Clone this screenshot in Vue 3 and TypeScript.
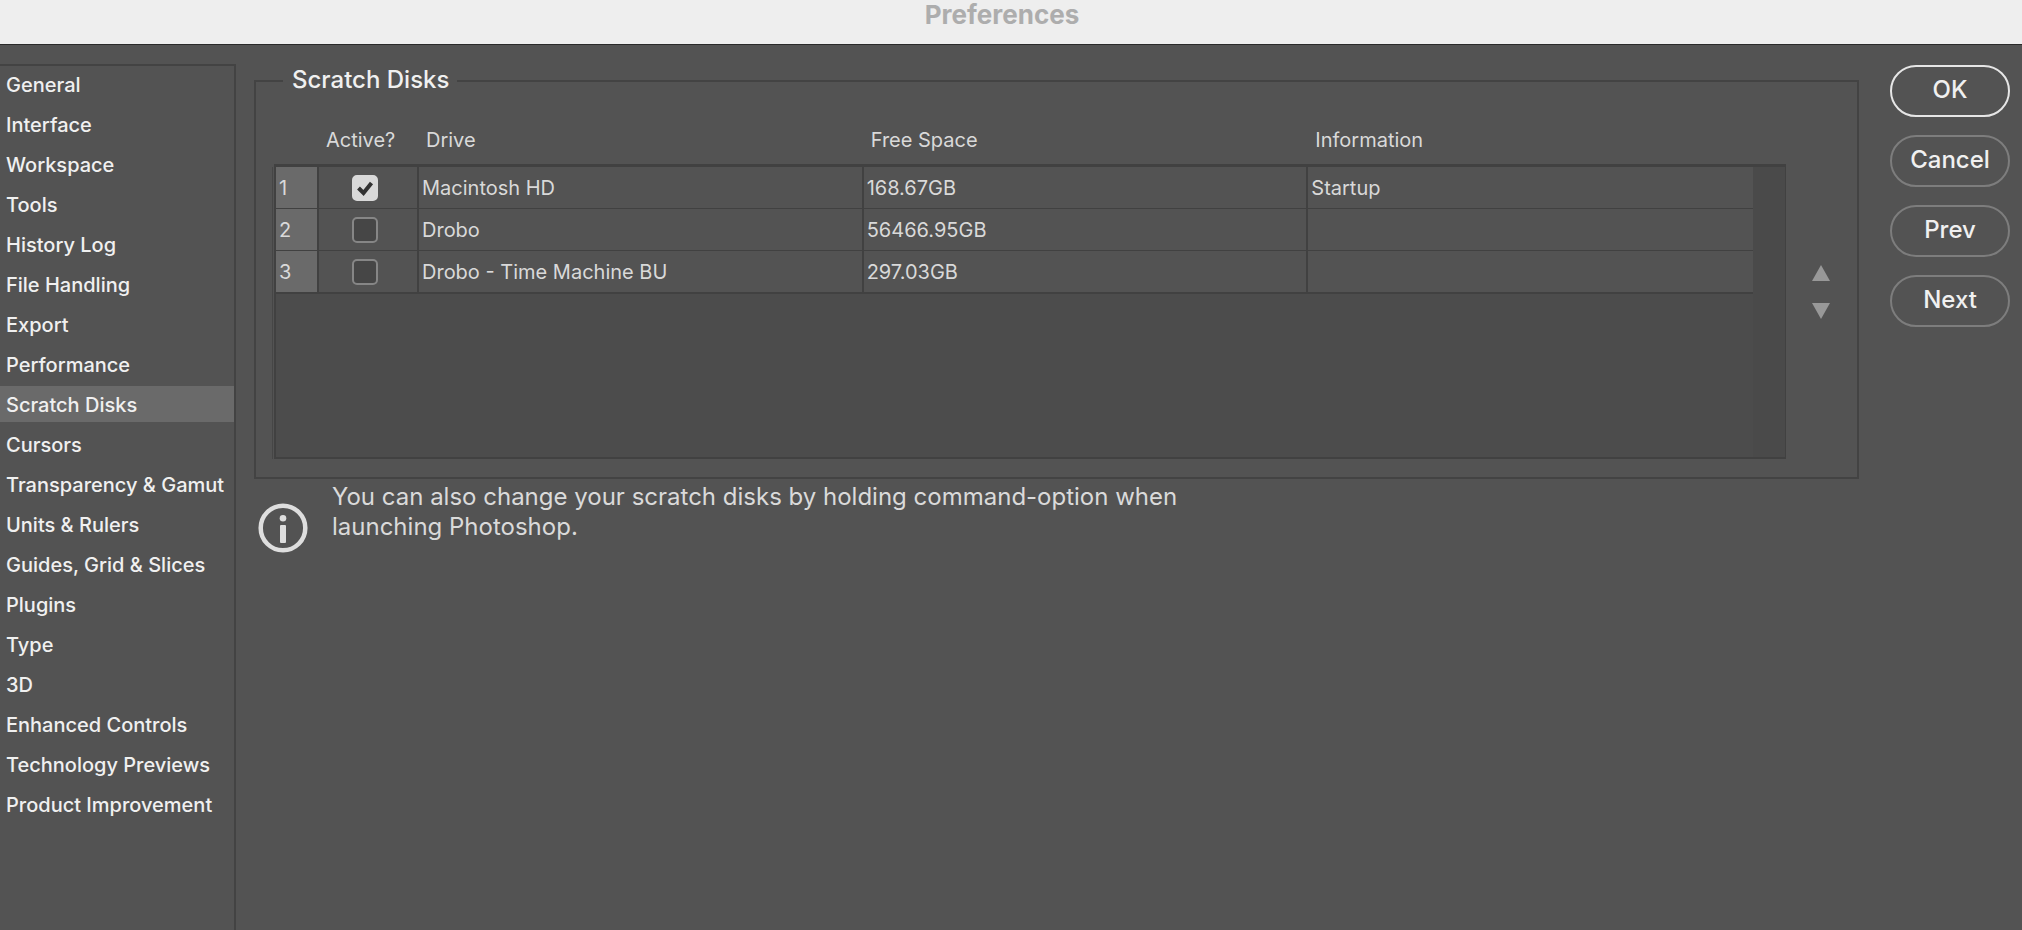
<script setup lang="ts">
import { ref } from 'vue'

interface Disk {
  drive: string
  free: string
  info: string
  active: boolean
}

const sections: string[] = [
  'General',
  'Interface',
  'Workspace',
  'Tools',
  'History Log',
  'File Handling',
  'Export',
  'Performance',
  'Scratch Disks',
  'Cursors',
  'Transparency & Gamut',
  'Units & Rulers',
  'Guides, Grid & Slices',
  'Plugins',
  'Type',
  '3D',
  'Enhanced Controls',
  'Technology Previews',
  'Product Improvement',
]

const current = ref('Scratch Disks')

const disks = ref<Disk[]>([
  { drive: 'Macintosh HD', free: '168.67GB', info: 'Startup', active: true },
  { drive: 'Drobo', free: '56466.95GB', info: '', active: false },
  { drive: 'Drobo - Time Machine BU', free: '297.03GB', info: '', active: false },
])
</script>

<template>
  <div class="window">
    <header class="titlebar"><h1>Preferences</h1></header>
    <div class="body">
      <nav class="sidebar" aria-label="Preference sections">
        <ul>
          <li v-for="s in sections" :key="s">
            <button
              type="button"
              class="section"
              :class="{ selected: s === current }"
              @click="current = s"
            >{{ s }}</button>
          </li>
        </ul>
      </nav>

      <main class="content">
        <fieldset class="group">
          <legend>Scratch Disks</legend>
          <div class="disks">
            <table>
              <colgroup>
                <col class="col-num" />
                <col class="col-active" />
                <col />
                <col />
                <col />
              </colgroup>
              <thead>
                <tr>
                  <td></td>
                  <th scope="col">Active?</th>
                  <th scope="col">Drive</th>
                  <th scope="col">Free Space</th>
                  <th scope="col">Information</th>
                </tr>
              </thead>
              <tbody>
                <tr v-for="(d, i) in disks" :key="d.drive">
                  <th scope="row" class="num">{{ i + 1 }}</th>
                  <td>
                    <span class="tick">
                      <input v-model="d.active" type="checkbox" :aria-label="'Use ' + d.drive" />
                      <svg v-if="d.active" viewBox="0 0 26 26" aria-hidden="true">
                        <path d="M6.5 13 L11.5 18 L19.5 8" />
                      </svg>
                    </span>
                  </td>
                  <td>{{ d.drive }}</td>
                  <td>{{ d.free }}</td>
                  <td>{{ d.info }}</td>
                </tr>
                <tr class="filler" aria-hidden="true"><td colspan="5"></td></tr>
              </tbody>
            </table>
            <div class="track"></div>
            <div class="movers">
              <button type="button" aria-label="Move up">
                <svg viewBox="0 0 18 16"><path d="M9 0 L18 16 H0 Z" /></svg>
              </button>
              <button type="button" aria-label="Move down">
                <svg viewBox="0 0 18 16"><path d="M0 0 H18 L9 16 Z" /></svg>
              </button>
            </div>
          </div>
        </fieldset>

        <div class="note">
          <svg viewBox="0 0 50 50" aria-hidden="true">
            <circle class="ring" cx="25" cy="25" r="22.3" />
            <circle cx="25" cy="15.3" r="3.3" />
            <rect x="22" y="22" width="6" height="18" rx="1" />
          </svg>
          <p>You can also change your scratch disks by holding command-option when launching Photoshop.</p>
        </div>
      </main>

      <aside class="actions">
        <button type="button" class="primary">OK</button>
        <button type="button">Cancel</button>
        <button type="button">Prev</button>
        <button type="button">Next</button>
      </aside>
    </div>
  </div>
</template>

<style>
body {
  margin: 0;
  background: #535353;
}
</style>

<style scoped>
* {
  box-sizing: border-box;
}

.window {
  display: flex;
  flex-direction: column;
  min-height: 100vh;
  background: #535353;
  color: #f0f0f0;
  font-family: Inter, "Liberation Sans", sans-serif;
  font-size: 20px;
}

button {
  margin: 0;
  padding: 0;
  border: 0;
  background: none;
  color: inherit;
  font: inherit;
}

.titlebar {
  height: 45px;
  padding-right: 18px;
  border-bottom: 1px solid #2a2a2a;
  background: #eeeeee;
  text-align: center;
}

h1 {
  margin: 0;
  color: #adadad;
  font-size: 26px;
  font-weight: 700;
  line-height: 30px;
}

.body {
  display: flex;
  flex: 1;
}

.sidebar {
  flex: none;
  width: 236px;
  margin-top: 19px;
  border-top: 2px solid #434343;
  border-right: 2px solid #434343;
}

ul {
  display: flex;
  flex-direction: column;
  gap: 4px;
  margin: 0;
  padding: 0;
  list-style: none;
}

.section {
  display: block;
  width: 100%;
  height: 36px;
  padding: 2px 0 0 6px;
  font-weight: 500;
  text-align: left;
  white-space: nowrap;
}

.section.selected {
  background: #6a6a6a;
}

.content {
  flex: 1;
  min-width: 0;
  margin: 21px 31px 0 18px;
}

.group {
  min-width: 0;
  margin: 0;
  padding: 20px 0 18px 18px;
  border: 2px solid #434343;
}

legend {
  margin-left: 9px;
  padding: 0 8px 2px 9px;
  font-size: 24px;
  font-weight: 500;
  line-height: 28px;
}

.disks {
  display: flex;
}

table {
  flex: 1;
  width: 100%;
  min-width: 0;
  table-layout: fixed;
  border-collapse: separate;
  border-spacing: 0;
  color: #d9d9d9;
}

.col-num {
  width: 45px;
}

.col-active {
  width: 100px;
}

th,
td {
  height: 42px;
  padding: 0 0 0 3px;
  border-right: 2px solid #414141;
  border-bottom: 1px solid #414141;
  font-weight: 400;
  text-align: left;
}

thead th,
thead td {
  height: 51px;
  padding-left: 7px;
  border-right: 0;
  border-bottom: 3px solid #414141;
}

td:last-child {
  border-right: 0;
}

.num,
.filler td {
  border-left: 2px solid #414141;
  box-shadow: -1px 0 #535353, -2px 0 #464646;
}

.num {
  background: #6a6a6a;
}

.filler td {
  height: 166px;
  border-top: 1px solid #414141;
  border-bottom: 2px solid #414141;
  background: #4c4c4c;
}

.tick {
  display: grid;
  width: 26px;
  margin-left: 30px;
}

.tick input,
.tick svg {
  grid-area: 1 / 1;
  width: 26px;
  height: 26px;
}

.tick input {
  margin: 0;
  border: 2px solid #868686;
  border-radius: 5px;
  background: #464646;
  appearance: none;
}

.tick input:checked {
  border-color: #d9d9d9;
  background: #d9d9d9;
}

.tick svg {
  fill: none;
  stroke: #323232;
  stroke-width: 4;
  pointer-events: none;
}

.track {
  flex: none;
  width: 33px;
  margin-top: 48px;
  border: solid #414141;
  border-width: 3px 1px 2px 0;
  background: #4a4a4a;
}

.movers {
  display: flex;
  flex: none;
  flex-direction: column;
  align-items: center;
  gap: 22px;
  width: 71px;
  padding: 149px 2px 0 0;
}

.movers button,
.movers svg {
  display: block;
  width: 18px;
  height: 16px;
  fill: #989898;
}

.note {
  display: flex;
  align-items: flex-start;
  gap: 24px;
  padding: 3px 0 0 4px;
  color: #dadada;
}

.note svg {
  flex: none;
  width: 50px;
  height: 50px;
  margin-top: 21px;
  fill: #dedede;
}

.note .ring {
  fill: none;
  stroke: #dedede;
  stroke-width: 4.5;
}

.note p {
  max-width: 860px;
  margin: 0;
  font-size: 24px;
  line-height: 30px;
}

.actions {
  display: flex;
  flex: none;
  flex-direction: column;
  gap: 18px;
  width: 120px;
  margin: 20px 12px 0 0;
}

.actions button {
  height: 52px;
  padding-bottom: 4px;
  border: 2px solid #7d7d7d;
  border-radius: 26px;
  font-size: 24px;
  font-weight: 500;
}

.actions .primary {
  border-color: #e6e6e6;
}
</style>
